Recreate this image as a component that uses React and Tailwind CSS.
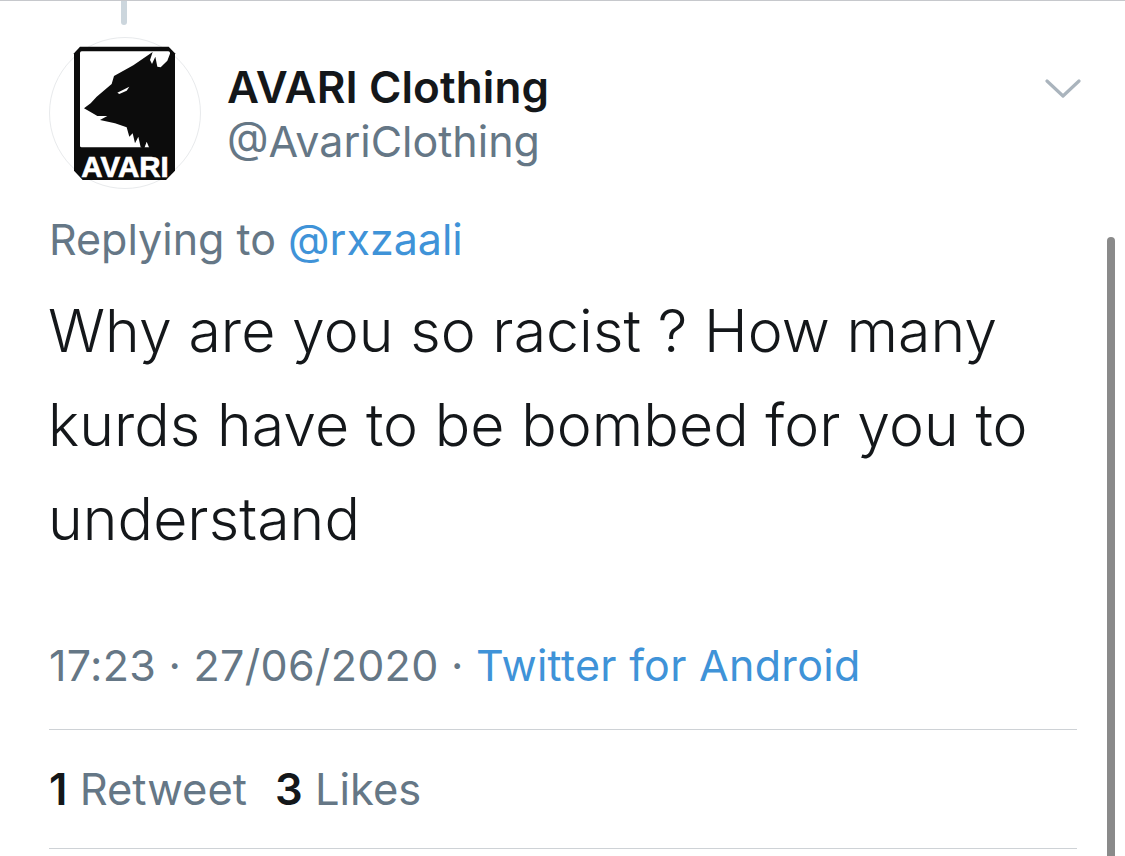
export default function App() {
  return (
    <div className="relative h-[856px] w-[1125px] overflow-hidden bg-white font-['Inter','Liberation_Sans',sans-serif] border-t border-t-[#c6c8cc]">
      <div className="absolute left-[121px] top-0 h-[24px] w-[6px] rounded-b-full bg-[#ccd6dd]" />
      <div className="absolute right-[10px] top-[236px] h-[640px] w-[8px] rounded-full bg-[#8a8a8a]" />
      <div className="flex flex-col pl-[49px] pr-[48px] pt-[36px]">
        <div className="relative flex items-start">
          <div className="h-[152px] w-[152px] shrink-0 rounded-full border border-[#e8eaec] bg-white">
            <svg viewBox="-60 -6 450 450" className="h-full w-full overflow-visible">
              <path fill="#0c0c0c" d="M12 40 L30 20 L296 20 L315 40 L315 392 L288 420 L38 420 L12 392 Z" />
              <rect x="30" y="34" width="270" height="288" rx="5" fill="#fff" />
              <path fill="#0c0c0c" d="M42 205 L62 190 L80 170 L125 132 L132 108 L190 76 L248 36 L240 60 L246 72 L256 50 L262 80 L272 82 L292 62 L302 36 L304 324 L238 324 L230 305 L222 327 L212 322 L205 290 L195 310 L188 280 L178 290 L170 262 L135 250 L90 240 L112 228 L82 228 L72 222 Z" />
              <path fill="#fff" d="M142 158 L178 140 L170 152 L148 162 Z" />
              <text x="165" y="410" textAnchor="middle" fill="#fff" stroke="#fff" strokeWidth="2" fontFamily="'Liberation Sans',sans-serif" fontWeight="700" fontSize="88" textLength="262" lengthAdjust="spacingAndGlyphs">AVARI</text>
            </svg>
          </div>
          <div className="ml-[26px] mt-[23px] flex flex-col">
            <div className="text-[44px] leading-[54px] font-semibold tracking-[0.1px] text-[#14171a]">AVARI Clothing</div>
            <div className="text-[43px] leading-[54px] text-[#657786]">@AvariClothing</div>
          </div>
          <svg viewBox="0 0 36 22" className="absolute right-[-4px] top-[41px] h-[22px] w-[36px]" fill="none" stroke="#aab4bd" strokeWidth="3.2" strokeLinecap="round" strokeLinejoin="round">
            <path d="M2 3 L18 18 L34 3" />
          </svg>
        </div>
        <div className="mt-[23px] text-[43px] leading-[54px] text-[#657786]">
          Replying to <span className="text-[#3f93d8]">@rxzaali</span>
        </div>
        <div className="mt-[18px] -ml-[1px] w-[1010px] text-[59px] leading-[94px] tracking-[0.05px] font-light text-[#14171a]">
          Why are you so racist ? How many kurds have to be bombed for you to understand
        </div>
        <div className="mt-[72px] text-[43px] leading-[54px] tracking-[0.3px] text-[#657786]">
          17:23 · 27/06/2020 · <span className="text-[#3f93d8]">Twitter for Android</span>
        </div>
        <div className="mt-[37px] border-t border-[#ced2d6]" />
        <div className="flex h-[119px] items-center gap-[28px] border-b border-[#ced2d6] pt-[1px] text-[43.5px] text-[#657786]">
          <div><span className="font-semibold text-[#14171a]">1</span> Retweet</div>
          <div><span className="font-semibold text-[#14171a]">3</span> Likes</div>
        </div>
      </div>
    </div>
  );
}
